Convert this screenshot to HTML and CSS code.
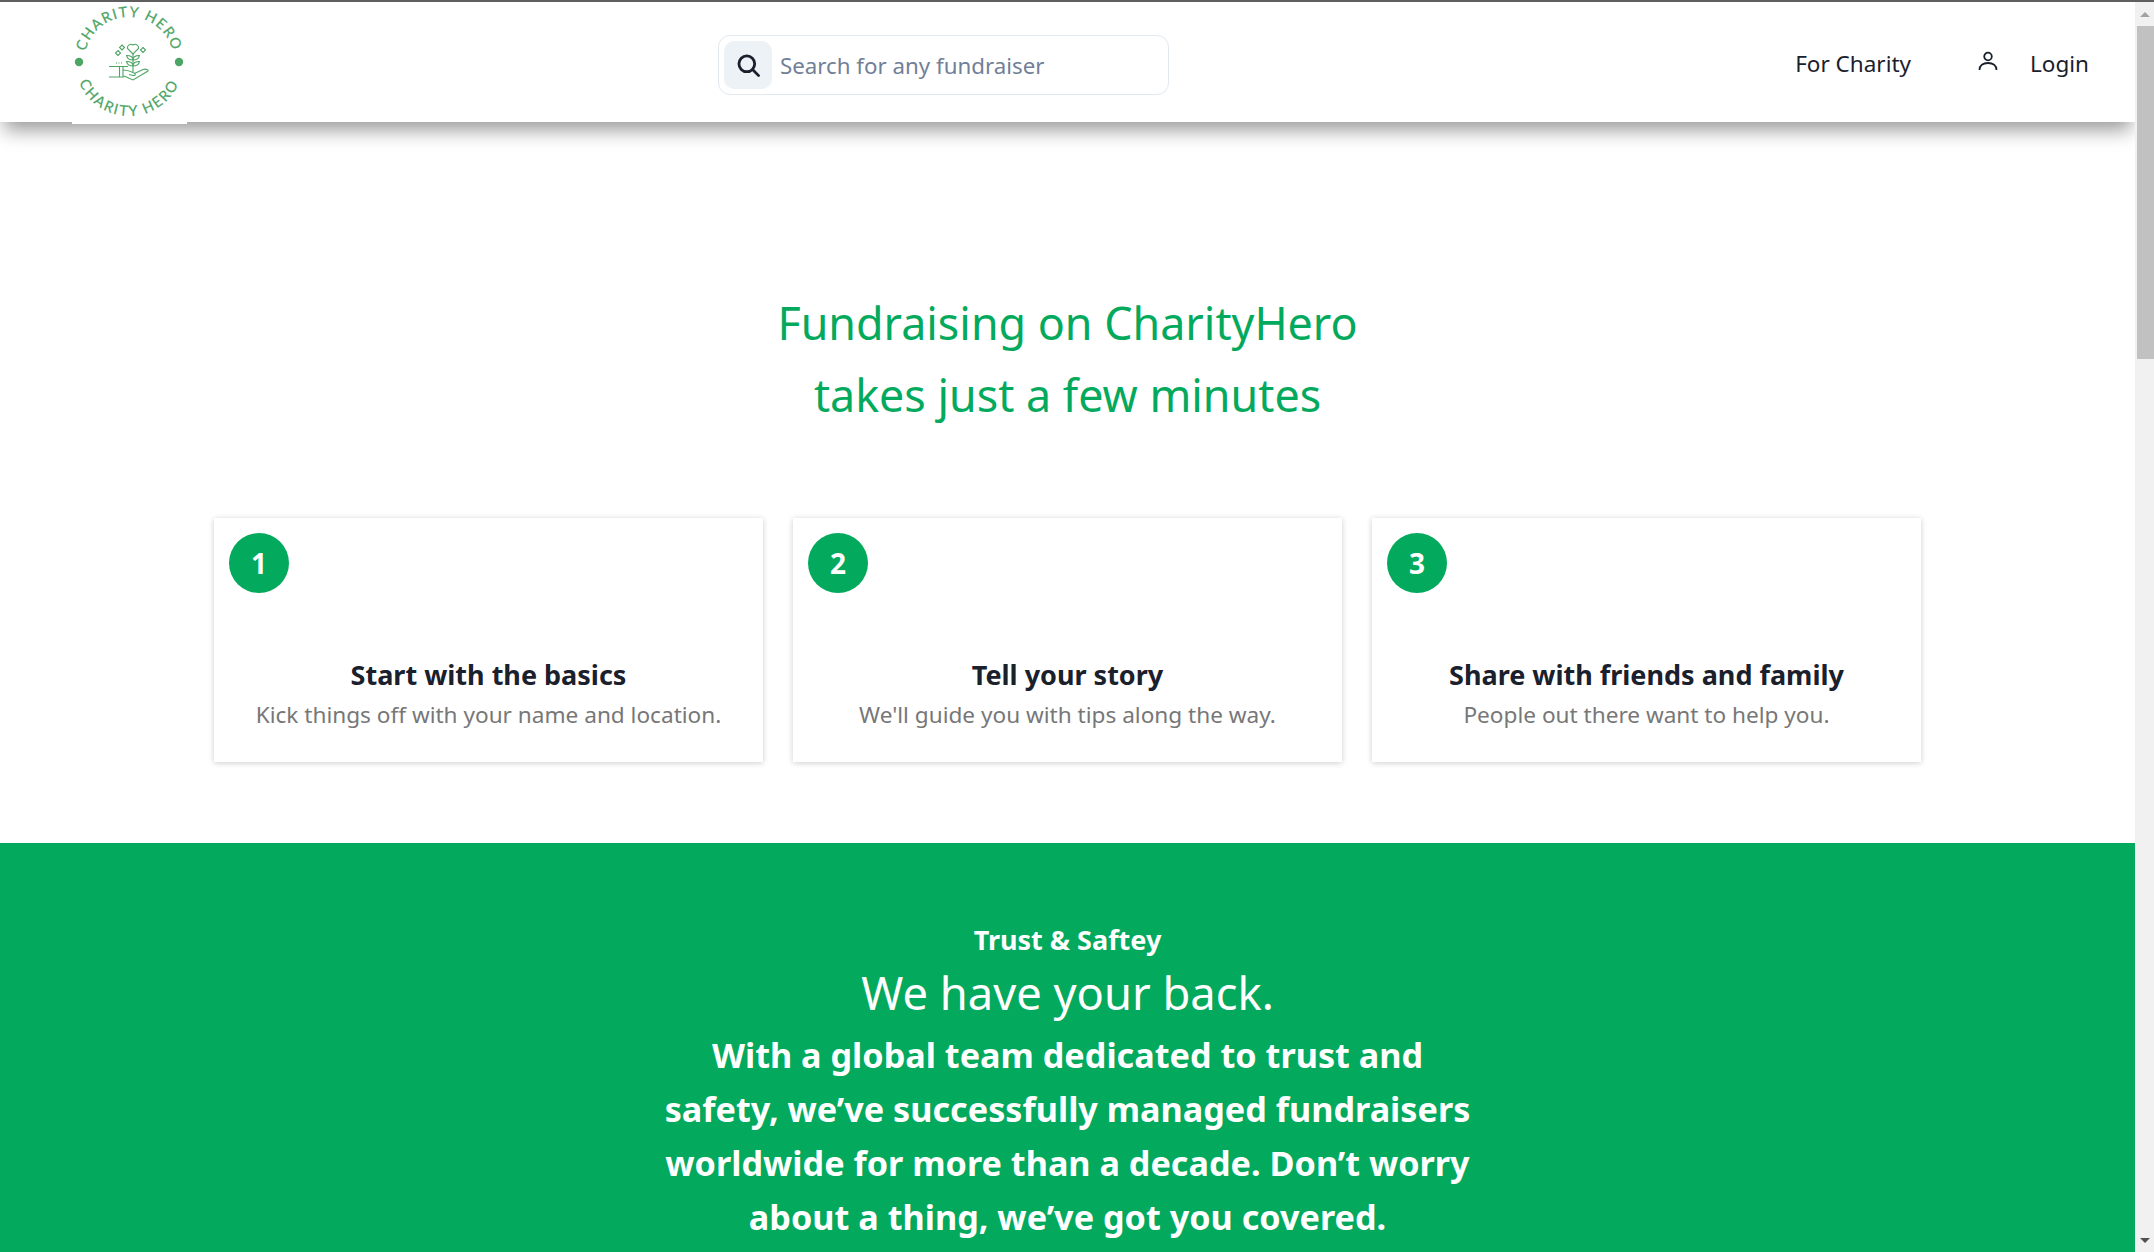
FILE: index.html
```html
<!DOCTYPE html>
<html lang="en">

<head>
	<meta charset="UTF-8">
	<title>CharityHero</title>
	<link rel="stylesheet" href="styles.css">
</head>

<body>
	<div class="window-line"></div>
	<div class="window">
		<div class="page">
			<header class="navbar">
				<a class="logo" href="#">
					<svg viewBox="72 2 115 122" width="115" height="122">
						<defs>
							<path id="arcTop" d="M84 62 A45 45 0 0 1 174 62"></path>
							<path id="arcBottom" d="M75 62 A54 54 0 0 0 183 62"></path>
						</defs>
						<text class="logo-text logo-text-top"><textPath href="#arcTop" startOffset="50%" text-anchor="middle">CHARITY HERO</textPath></text>
						<text class="logo-text"><textPath href="#arcBottom" startOffset="50%" text-anchor="middle">CHARITY HERO</textPath></text>
						<circle class="logo-dot" cx="79" cy="62" r="4.200"></circle>
						<circle class="logo-dot" cx="179" cy="62" r="4.200"></circle>
						<g class="logo-icon">
							<path d="M133 54 L127.500 48.500 A3.500 3.500 0 0 1 133 45 A3.500 3.500 0 0 1 138.500 48.500 Z"></path>
							<path d="M133 54 V72"></path>
							<path d="M133 60 C129 60 127 58 126.500 55.500 C130 55.500 133 56.500 133 60 C133 56.500 136 55.500 139.500 55.500 C139 58 137 60 133 60"></path>
							<path d="M133 66 C129 66 127 64 126.500 61.500 C130 61.500 133 62.500 133 66 C133 62.500 136 61.500 139.500 61.500 C139 64 137 66 133 66"></path>
							<path d="M122 45 L124.500 47.500 L122 50 L119.500 47.500 Z"></path>
							<path d="M118 50.500 L120.500 53 L118 55.500 L115.500 53 Z"></path>
							<path d="M143 47.500 L145.500 50 L143 52.500 L140.500 50 Z"></path>
							<path d="M116 63 H117 M118.500 63 H119.500 M121 63 H122"></path>
							<path d="M109 66.500 H128 M109 77 H124 M119.500 66.500 V77 M123 66.500 V77"></path>
							<path d="M123 70 C127 70 130 71 133 72.500 C136 73.500 136 76 133 75.500 L129 74.500 M134.500 73.500 L143 69.500 C146 68.500 149 70 148 71 L133 80 L124 76"></path>
						</g>
					</svg>
				</a>
				<form class="search">
					<span class="search-icon">
						<svg viewBox="0 0 24 24" width="27" height="27">
							<circle cx="10.500" cy="10.500" r="7"></circle>
							<path d="M15.800 15.800 L21 21"></path>
						</svg>
					</span>
					<span class="search-placeholder">Search for any fundraiser</span>
				</form>
				<nav class="nav-links">
					<a class="nav-link" href="#">For Charity</a>
					<span class="user-icon">
						<svg viewBox="0 0 20 20" width="20" height="20">
							<circle cx="10" cy="5.500" r="3.800"></circle>
							<path d="M1.500 19 C1.500 14.500 5 12 10 12 C15 12 18.500 14.500 18.500 19"></path>
						</svg>
					</span>
					<a class="nav-link" href="#">Login</a>
				</nav>
			</header>

			<section class="steps">
				<h1 class="steps-title">Fundraising on CharityHero<br>takes just a few minutes</h1>
				<div class="steps-grid">
					<div class="step-card">
						<div class="step-number">1</div>
						<h3>Start with the basics</h3>
						<p>Kick things off with your name and location.</p>
					</div>
					<div class="step-card">
						<div class="step-number">2</div>
						<h3>Tell your story</h3>
						<p>We'll guide you with tips along the way.</p>
					</div>
					<div class="step-card">
						<div class="step-number">3</div>
						<h3>Share with friends and family</h3>
						<p>People out there want to help you.</p>
					</div>
				</div>
			</section>

			<section class="trust">
				<h4>Trust &amp; Saftey</h4>
				<h2>We have your back.</h2>
				<p>With a global team dedicated to trust and<br>safety, we’ve successfully managed fundraisers<br>worldwide for more than a decade. Don’t worry<br>about a thing, we’ve got you covered.</p>
			</section>
		</div>

		<div class="scrollbar">
			<div class="scroll-btn"><span class="arrow-up"></span></div>
			<div class="scroll-track"><div class="scroll-thumb"></div></div>
			<div class="scroll-btn"><span class="arrow-down"></span></div>
		</div>
	</div>
</body>

</html>
```

FILE: styles.css
```css
body {
	font-family: "Noto Sans", "Open Sans", sans-serif;
	margin: 0;
	height: 1252px;
	overflow: hidden;
	background-color: #fff;
	color: #1a202c;
}

a {
	color: inherit;
	text-decoration: none;
}

.window-line {
	height: 2px;
	background-color: #5f5f5f;
}

.window {
	display: flex;
	height: 1250px;
}

.page {
	flex: 1;
	min-width: 0;
	overflow: hidden;
}

/* navbar */
.navbar {
	position: relative;
	z-index: 2;
	display: flex;
	align-items: flex-start;
	height: 120px;
	padding-left: 72px;
	padding-right: 46px;
	background: #fff;
	box-shadow: 0 12px 18px -4px rgba(0, 0, 0, 0.4);
}

.logo {
	display: block;
	width: 115px;
	height: 122px;
	background: #fff;
}

.logo svg {
	display: block;
}

.logo-text {
	font-family: "Lato", sans-serif;
	font-size: 14.500px;
	letter-spacing: 1.900px;
	fill: #4da565;
	stroke: #4da565;
	stroke-width: 0.200;
}

.logo-text-top {
	letter-spacing: 1.300px;
}

.logo-dot {
	fill: #4da565;
}

.logo-icon path {
	fill: none;
	stroke: #4da565;
	stroke-width: 1.100;
}

.search {
	display: flex;
	align-items: center;
	gap: 8px;
	box-sizing: border-box;
	width: 451px;
	height: 60px;
	margin-top: 33px;
	margin-left: 531px;
	padding: 0 5px;
	border: 1px solid #e2e8f0;
	border-radius: 12px;
}

.search-icon {
	display: flex;
	align-items: center;
	justify-content: center;
	width: 48px;
	height: 48px;
	background-color: #edf2f7;
	border-radius: 10px;
}

.search-icon circle,
.search-icon path {
	fill: none;
	stroke: #1a202c;
	stroke-width: 2.500;
	stroke-linecap: round;
}

.search-placeholder {
	font-size: 22.300px;
	color: #718096;
}

.nav-links {
	display: flex;
	align-items: center;
	margin-left: auto;
	height: 124px;
	margin-top: -1px;
	font-size: 22.500px;
}

.user-icon {
	display: flex;
	margin-left: 67px;
	margin-right: 32px;
	margin-top: -4px;
}

.user-icon circle,
.user-icon path {
	fill: none;
	stroke: #1a202c;
	stroke-width: 1.800;
}

/* how it works */
.steps {
	padding-top: 165px;
}

.steps-title {
	margin: 0;
	font-size: 44.800px;
	font-weight: 400;
	line-height: 72px;
	text-align: center;
	color: #03a95c;
}

.steps-grid {
	display: grid;
	grid-template-columns: repeat(3, 549px);
	justify-content: center;
	gap: 30px;
	margin-top: 87px;
}

.step-card {
	height: 244px;
	padding: 15px 15px 0;
	box-sizing: border-box;
	text-align: center;
	box-shadow: 0 1px 6px rgba(0, 0, 0, 0.2);
}

.step-number {
	display: flex;
	align-items: center;
	justify-content: center;
	width: 60px;
	height: 60px;
	border-radius: 50%;
	background-color: #03a95c;
	color: #fff;
	font-size: 28px;
	font-weight: 700;
}

.step-card h3 {
	margin: 62px 0 0;
	font-size: 27px;
	line-height: 40px;
	font-weight: 700;
}

.step-card p {
	margin: 0;
	font-size: 22.600px;
	line-height: 40px;
	color: #777;
}

/* trust band */
.trust {
	height: 420px;
	margin-top: 81px;
	padding-top: 74px;
	box-sizing: border-box;
	background-color: #03a95c;
	color: #fff;
	text-align: center;
}

.trust h4 {
	margin: 0;
	font-size: 27px;
	line-height: 46px;
	font-weight: 700;
}

.trust h2 {
	margin: 0;
	font-size: 45.300px;
	line-height: 60px;
	font-weight: 400;
}

.trust p {
	margin: 5px 0 0;
	font-size: 34.200px;
	line-height: 54px;
	font-weight: 700;
}

/* window scrollbar */
.scrollbar {
	display: flex;
	flex-direction: column;
	width: 19px;
	background-color: #f1f1f1;
}

.scroll-btn {
	display: flex;
	align-items: center;
	justify-content: center;
	height: 24px;
}

.arrow-up,
.arrow-down {
	width: 0;
	height: 0;
	border-left: 5px solid transparent;
	border-right: 5px solid transparent;
}

.arrow-up {
	border-bottom: 5px solid #a3a3a3;
}

.arrow-down {
	border-top: 5px solid #505050;
}

.scroll-track {
	flex: 1;
	padding-left: 2px;
}

.scroll-thumb {
	height: 333px;
	background-color: #c1c1c1;
}
```
